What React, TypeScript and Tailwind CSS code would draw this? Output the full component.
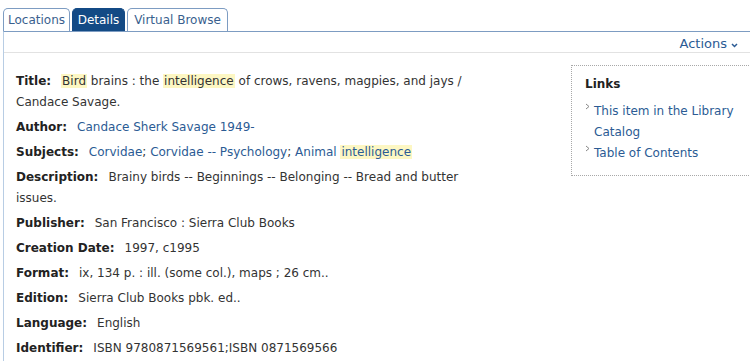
import React from 'react';

const Hl: React.FC<{ children: React.ReactNode }> = ({ children }) => (
  <span className="bg-[#fdf7c3] px-[1px]">{children}</span>
);

const Field: React.FC<{ label: string; children: React.ReactNode }> = ({ label, children }) => (
  <div className="mb-[4px] leading-[21px]">
    <span className="font-bold text-[#222] mr-[10px]">{label}</span>
    {children}
  </div>
);

const Arrow: React.FC = () => (
  <svg width="5" height="7" viewBox="0 0 5 7" className="absolute left-[-9px] top-[2px]">
    <path d="M1 1 L4 3.5 L1 6" fill="none" stroke="#888" strokeWidth="1" />
  </svg>
);

const App: React.FC = () => {
  return (
    <div className="w-[750px] h-[361px] overflow-hidden bg-white text-[12px] text-[#333]" style={{ fontFamily: '"DejaVu Sans", Verdana, sans-serif' }}>
      {/* Tabs */}
      <div className="flex items-end gap-[2px] pl-[3px] pt-[8px]">
        <div className="h-[23px] w-[67px] flex items-center justify-center rounded-t-[5px] border border-b-0 border-[#7d9cc2] text-[#3a5f8e]">Locations</div>
        <div className="h-[23px] w-[53px] flex items-center justify-center rounded-t-[5px] border border-b-0 border-[#134a85] bg-[#134a85] text-white">Details</div>
        <div className="h-[23px] w-[101px] flex items-center justify-center rounded-t-[5px] border border-b-0 border-[#7d9cc2] text-[#3a5f8e]">Virtual Browse</div>
      </div>

      {/* Panel */}
      <div className="ml-[3px] border-t border-l border-t-[#7d9cc2] border-l-[#b8cde4]">
        <div className="h-[21px] flex items-center justify-end pr-[12px] pt-[3px] border-b border-[#e2e2e2] text-[#2b5b94] text-[13px]">
          <span>Actions</span>
          <svg width="7" height="5" viewBox="0 0 7 5" className="ml-[4px] mt-[4px]">
            <path d="M1 1 L3.5 3.5 L6 1" fill="none" stroke="#2b5b94" strokeWidth="1.5" />
          </svg>
        </div>

        <div className="flex pt-[18px]">
          <div className="w-[567px] shrink-0 pl-[12px]">
            <div className="w-[475px]">
              <Field label="Title:">
                <Hl>Bird</Hl> brains : the <Hl>intelligence</Hl> of crows, ravens, magpies, and jays / Candace Savage.
              </Field>
              <Field label="Author:">
                <span className="text-[#2b5b94]">Candace Sherk Savage 1949-</span>
              </Field>
              <Field label="Subjects:">
                <span className="text-[#2b5b94]">Corvidae</span>; <span className="text-[#2b5b94]">Corvidae -- Psychology</span>;{' '}
                <span className="text-[#2b5b94]">Animal <Hl>intelligence</Hl></span>
              </Field>
              <Field label="Description:">
                Brainy birds -- Beginnings -- Belonging -- Bread and butter issues.
              </Field>
              <Field label="Publisher:">San Francisco : Sierra Club Books</Field>
              <Field label="Creation Date:">1997, c1995</Field>
              <Field label="Format:">ix, 134 p. : ill. (some col.), maps ; 26 cm..</Field>
              <Field label="Edition:">Sierra Club Books pbk. ed..</Field>
              <Field label="Language:">English</Field>
              <Field label="Identifier:">ISBN 9780871569561;ISBN 0871569566</Field>
            </div>
          </div>

          <div className="w-[190px] shrink-0 h-[111px] mt-[-6px] border border-dotted border-[#a8a8a8] pl-[13px] pt-[8px] leading-[21px]">
            <div className="font-bold text-[#222] mb-[6px]">Links</div>
            <ul className="pl-[9px] text-[#2b5b94]">
              <li className="relative">
                <Arrow />
                This item in the Library Catalog
              </li>
              <li className="relative">
                <Arrow />
                Table of Contents
              </li>
            </ul>
          </div>
        </div>
      </div>
    </div>
  );
};

export default App;
